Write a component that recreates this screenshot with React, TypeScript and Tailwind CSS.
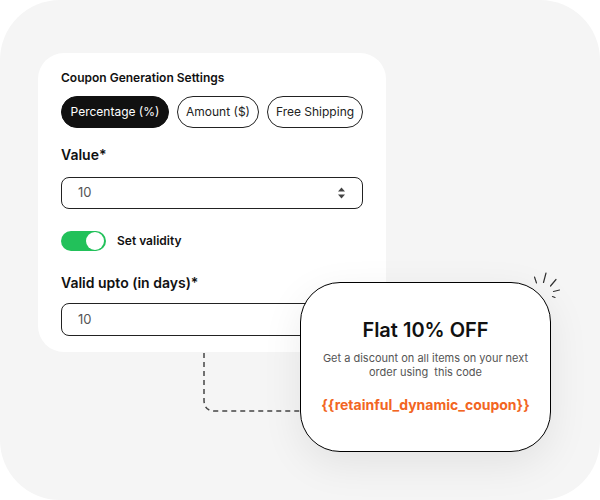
import React from "react";

const font = { fontFamily: "Inter, 'Noto Sans', sans-serif" };

function Pill({ label, width, active }: { label: string; width: string; active?: boolean }) {
  return (
    <button
      className={
        (active
          ? "border-[#111] bg-[#111] text-white "
          : "border-[#222] bg-white text-[#222] ") +
        width +
        " h-8 shrink-0 whitespace-nowrap rounded-full border text-[12px]"
      }
    >
      {label}
    </button>
  );
}

export default function App() {
  return (
    <div className="h-[500px] w-[600px] bg-white" style={font}>
      <div className="relative h-full w-full overflow-hidden rounded-[60px] bg-[#f5f5f5] pl-[38px] pt-[53px]">
        {/* Settings card */}
        <div className="flex w-[348px] flex-col rounded-[26px] bg-white px-[23px] pb-4 pt-[17px]">
          <h3 className="text-[12px] font-semibold leading-4 text-[#111]">
            Coupon Generation Settings
          </h3>
          <div className="mt-[10px] flex gap-2">
            <Pill label="Percentage (%)" width="w-[108px]" active />
            <Pill label="Amount ($)" width="w-[82px]" />
            <Pill label="Free Shipping" width="w-[96px]" />
          </div>

          <label className="mt-[17px] text-[14px] font-semibold leading-5 text-[#111]">Value*</label>
          <div className="mt-3 flex h-8 w-[302px] items-center justify-between rounded-lg border border-[#222] pl-4 pr-4">
            <span className="text-[13px] text-[#555]">10</span>
            <svg width="9" height="14" viewBox="0 0 9 14">
              <path d="M4.5 1.5 L8 5.5 H1 Z" fill="#444" />
              <path d="M4.5 12.5 L8 8.5 H1 Z" fill="#444" />
            </svg>
          </div>

          <div className="mt-[22px] flex items-center gap-[11px]">
            <div className="flex h-5 w-[45px] items-center justify-end rounded-full bg-[#22c15a] px-[2px]">
              <div className="h-[18px] w-[18px] rounded-full bg-white" />
            </div>
            <span className="text-[12px] font-semibold text-[#111]">Set validity</span>
          </div>

          <label className="mt-[22px] text-[14px] font-semibold leading-5 text-[#111]">
            Valid upto (in days)*
          </label>
          <div className="mt-[10px] flex h-[33px] w-[302px] items-center rounded-lg border border-[#222] pl-4">
            <span className="text-[13px] text-[#555]">10</span>
          </div>
        </div>

        {/* Dashed connector + sparkle */}
        <svg className="absolute left-0 top-0" width="600" height="500">
          <path
            d="M204 353 V400 Q204 411 215 411 H302"
            fill="none"
            stroke="#444"
            strokeWidth="1.5"
            strokeDasharray="5 4"
          />
          <g stroke="#333" strokeWidth="1.2" strokeLinecap="round">
            <line x1="534.5" y1="277" x2="536.5" y2="283" />
            <line x1="546" y1="273" x2="543.5" y2="282.5" />
            <line x1="556" y1="279.5" x2="550.5" y2="286" />
            <line x1="553.5" y1="291.5" x2="559.5" y2="290" />
            <line x1="552.5" y1="296.5" x2="555" y2="297.5" />
          </g>
        </svg>

        {/* Coupon preview card */}
        <div className="absolute left-[300px] top-[282px] flex h-[170px] w-[251px] flex-col items-center rounded-[40px] border-[1.5px] border-black bg-white pt-[35px] text-center shadow-[0_12px_40px_rgba(0,0,0,0.08)]">
          <div className="text-[20px] font-semibold leading-6 text-[#111]">Flat 10% OFF</div>
          <p className="mt-[9px] w-[220px] text-[11px] leading-[14px] text-[#555]">
            Get a discount on all items on your next order using&nbsp; this code
          </p>
          <div className="mt-[15px] text-[14px] font-bold text-[#f26522]">
            {"{{retainful_dynamic_coupon}}"}
          </div>
        </div>
      </div>
    </div>
  );
}
